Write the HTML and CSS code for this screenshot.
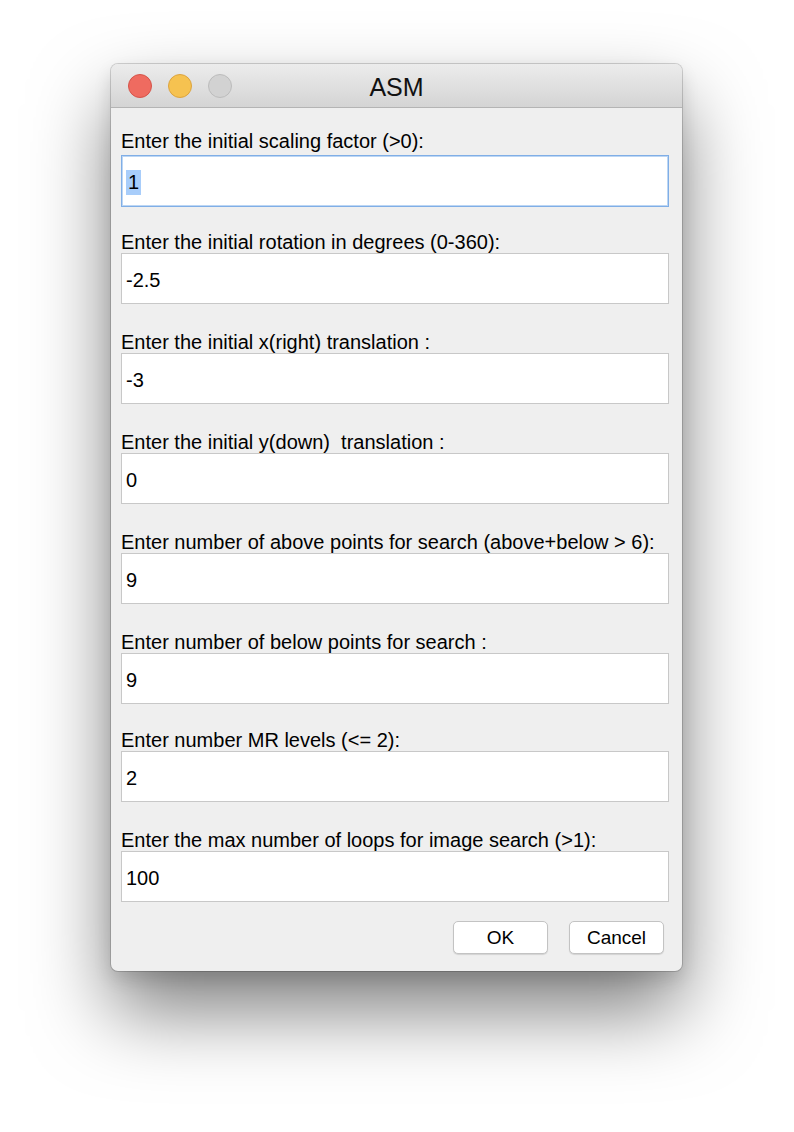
FILE: index.html
```html
<!DOCTYPE html>
<html>
<head>
<meta charset="utf-8">
<link rel="stylesheet" href="styles.css">
</head>
<body>
<div class="window">
  <div class="titlebar">
    <div class="lights">
      <span class="light red"></span>
      <span class="light yellow"></span>
      <span class="light gray"></span>
    </div>
    <div class="title">ASM</div>
  </div>
  <div class="content">
    <div class="row row-first">
      <div class="label">Enter the initial scaling factor (&gt;0):</div>
      <div class="field focused"><span class="sel">1</span></div>
    </div>
    <div class="row row-second">
      <div class="label">Enter the initial rotation in degrees (0-360):</div>
      <div class="field">-2.5</div>
    </div>
    <div class="row">
      <div class="label">Enter the initial x(right) translation :</div>
      <div class="field">-3</div>
    </div>
    <div class="row">
      <div class="label">Enter the initial y(down)&nbsp; translation :</div>
      <div class="field">0</div>
    </div>
    <div class="row">
      <div class="label">Enter number of above points for search (above+below &gt; 6):</div>
      <div class="field">9</div>
    </div>
    <div class="row">
      <div class="label">Enter number of below points for search :</div>
      <div class="field">9</div>
    </div>
    <div class="row row-seventh">
      <div class="label">Enter number MR levels (&lt;= 2):</div>
      <div class="field">2</div>
    </div>
    <div class="row">
      <div class="label">Enter the max number of loops for image search (&gt;1):</div>
      <div class="field">100</div>
    </div>
    <div class="buttons">
      <div class="btn">OK</div>
      <div class="btn">Cancel</div>
    </div>
  </div>
</div>
</body>
</html>
```
FILE: styles.css
```css
html, body {
  margin: 0;
  padding: 0;
  background: #ffffff;
}
body {
  width: 794px;
  height: 1132px;
  overflow: hidden;
  font-family: "Liberation Sans", Arial, sans-serif;
  color: #000;
}
.window {
  margin: 64px 0 0 111px;
  width: 571px;
  height: 907px;
  box-sizing: border-box;
  border-radius: 7px;
  background: #efefef;
  box-shadow: 0 0 0 1px rgba(0,0,0,0.16), 0 40px 78px rgba(0,0,0,0.5), 0 8px 18px rgba(0,0,0,0.12);
  overflow: hidden;
  display: flex;
  flex-direction: column;
}
.titlebar {
  height: 43px;
  flex: none;
  background: linear-gradient(#ececec, #d4d4d4);
  border-bottom: 1px solid #b4b4b4;
  display: flex;
  align-items: center;
  position: relative;
}
.lights {
  display: flex;
  gap: 16px;
  padding-left: 17px;
}
.light {
  width: 24px;
  height: 24px;
  border-radius: 50%;
  box-sizing: border-box;
  display: block;
}
.red { background: #ef6b60; border: 1px solid #d5544a; }
.yellow { background: #f6c250; border: 1px solid #dca43f; }
.gray { background: #d2d2d2; border: 1px solid #bcbcbc; }
.title {
  position: absolute;
  left: 0;
  right: 0;
  top: 0;
  height: 43px;
  line-height: 46px;
  text-align: center;
  font-size: 25px;
  color: #111;
}
.content {
  padding: 0 13px 0 10px;
  display: flex;
  flex-direction: column;
}
.row {
  display: flex;
  flex-direction: column;
}
.label {
  font-size: 20px;
  line-height: 22px;
  padding: 27px 0 0 0;
  white-space: nowrap;
}
.field {
  height: 51px;
  box-sizing: border-box;
  background: #fff;
  border: 1px solid #c8c8c8;
  font-size: 20px;
  line-height: 47px;
  padding: 3px 0 0 4px;
}
.row-first .label { padding: 22px 0 3px 0; }
.row-first .field {
  height: 52px;
  border: 1px solid #80aee6;
  box-shadow: inset 0 0 0 1px #bcd6f4;
}
.row-second .label { padding-top: 24px; }
.row-seventh .label { padding-top: 25px; }
.sel {
  display: inline-block;
  background: #a8cdfa;
  height: 25px;
  line-height: 25px;
  padding: 0 2px;
}
.buttons {
  display: flex;
  justify-content: flex-end;
  gap: 21px;
  padding: 19px 5px 0 0;
}
.btn {
  width: 95px;
  height: 33px;
  box-sizing: border-box;
  background: #fff;
  border: 1px solid #c3c3c3;
  border-radius: 5px;
  box-shadow: 0 1px 1px rgba(0,0,0,0.12);
  text-align: center;
  line-height: 31px;
  font-size: 19px;
}
```
